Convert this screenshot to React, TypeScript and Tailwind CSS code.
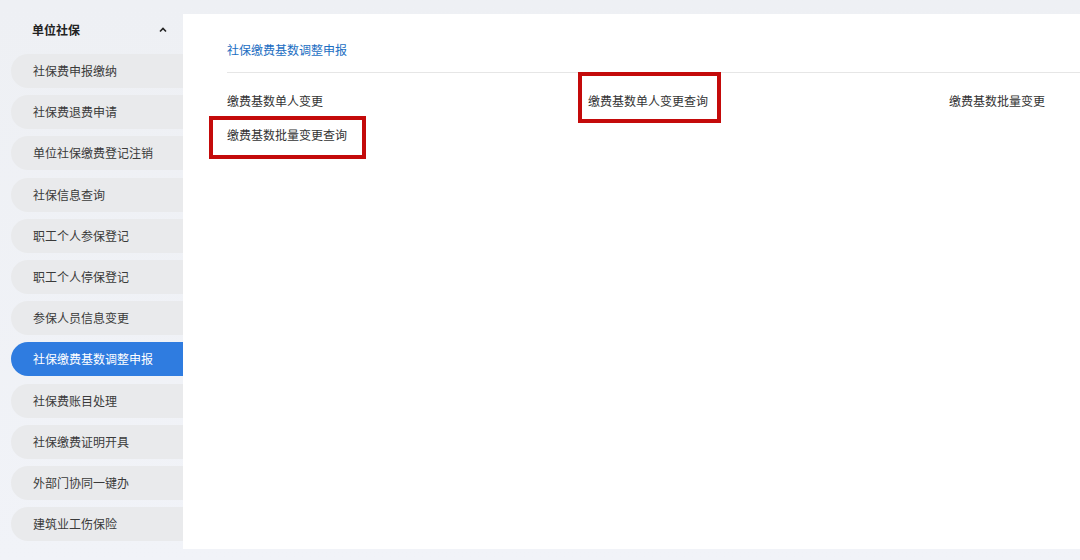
import React from "react";

const items = [
  "社保费申报缴纳",
  "社保费退费申请",
  "单位社保缴费登记注销",
  "社保信息查询",
  "职工个人参保登记",
  "职工个人停保登记",
  "参保人员信息变更",
  "社保缴费基数调整申报",
  "社保费账目处理",
  "社保缴费证明开具",
  "外部门协同一键办",
  "建筑业工伤保险",
];

export default function App() {
  const font = { fontFamily: '"Microsoft YaHei", "Noto Sans CJK SC", "Noto Sans", sans-serif' };
  return (
    <div
      className="w-[1080px] h-[560px] overflow-hidden bg-gradient-to-b from-[#eef0f4] to-[#f1f3f8] flex text-[12px] text-[#333]"
      style={font}
    >
      <aside className="w-[183px] shrink-0 flex flex-col pl-[11px]">
        <div className="h-[54px] flex items-center justify-between pl-[21px] pr-[16px] pt-[6px]">
          <span className="font-bold text-[12px] text-[#222]">单位社保</span>
          <svg width="8" height="6" viewBox="0 0 8 6">
            <path d="M1 4.5 L4 1.5 L7 4.5" fill="none" stroke="#222" strokeWidth="1.6" />
          </svg>
        </div>
        <nav className="flex flex-col gap-[7.2px]">
          {items.map((t, i) => {
            const active = i === 7;
            return (
              <div
                key={t}
                className={
                  "h-[34px] rounded-l-full flex items-center pl-[22px] " +
                  (active ? "bg-[#2f7ce0] text-white" : "bg-[#e9eaec] text-[#3a3a3a]")
                }
              >
                {t}
              </div>
            );
          })}
        </nav>
      </aside>
      <main className="flex-1 mt-[14px] h-[535px] bg-white relative pl-[44px]">
        <div className="h-[59px] pt-[14px] flex items-center border-b border-[#e6e6e6] text-[#1b6ec2]">
          社保缴费基数调整申报
        </div>
        <div className="flex flex-wrap w-[1083px] pt-[11px]">
          {["缴费基数单人变更", "缴费基数单人变更查询", "缴费基数批量变更", "缴费基数批量变更查询"].map((t) => (
            <div key={t} className="w-[361px] h-[34px] flex items-center">
              {t}
            </div>
          ))}
        </div>
        <div className="absolute left-[395px] top-[58px] w-[143px] h-[51px] border-[4px] border-[#c40a0a]" />
        <div className="absolute left-[26px] top-[102px] w-[157px] h-[43px] border-[4px] border-[#c40a0a]" />
      </main>
    </div>
  );
}
